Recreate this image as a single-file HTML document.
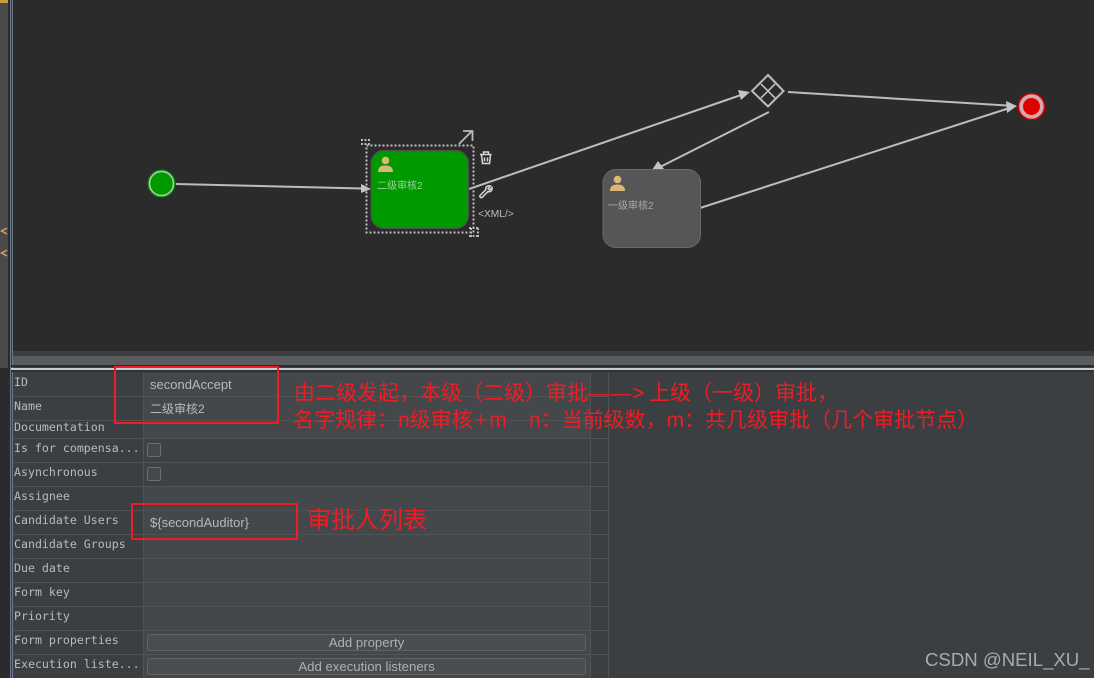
<!DOCTYPE html>
<html><head><meta charset="utf-8">
<style>
html,body{margin:0;padding:0;background:#3c3f41}
#p{position:relative;width:1094px;height:678px;overflow:hidden;background:#3c3f41;font-family:"Liberation Sans","Noto Sans CJK SC",sans-serif}
.a{position:absolute}
.l{position:absolute;left:14px;font:11.6px/14px "DejaVu Sans Mono","Liberation Mono",monospace;color:#b8bbbd;white-space:pre}
.h{position:absolute;left:13px;width:595px;height:1px;background:#505355}
.v{position:absolute;left:150px;font:13px/16px "Liberation Sans","Noto Sans CJK SC",sans-serif;color:#b8b8b8;white-space:pre}
.c{position:absolute;left:147px;width:12px;height:12px;border:1px solid #6b6e70;border-radius:2px;background:#45484a}
.b{position:absolute;left:147px;width:437px;height:15px;border:1px solid #606365;border-radius:3px;background:#4a4d4f;color:#aeb0b2;font-size:13.2px;line-height:16px;text-align:center}
.r{position:absolute;color:#ee1c25;font-size:21px;line-height:26px;white-space:pre}
.box{position:absolute;border:2px solid #ee1c25;box-sizing:border-box}
</style></head><body><div id="p">
<div class="a" style="left:0;top:0;width:8px;height:368px;background:#4a4a4a"></div>
<div class="a" style="left:0;top:0;width:9px;height:3px;background:#c8a040"></div>
<div class="a" style="left:8px;top:0;width:2px;height:368px;background:#2b2b2b"></div>
<div class="a" style="left:10px;top:0;width:1px;height:368px;background:#6a7a8c"></div>
<div class="a" style="left:11px;top:0;width:1px;height:368px;background:#3a3d40"></div>
<div class="a" style="left:12px;top:0;width:1px;height:368px;background:#6a7a8c"></div>
<div class="a" style="left:0;top:368px;width:10px;height:310px;background:#2b2b2b"></div>
<div class="a" style="left:10px;top:368px;width:1px;height:310px;background:#6a7a8c"></div>
<div class="a" style="left:11px;top:368px;width:1px;height:310px;background:#3c3f41"></div>
<div class="a" style="left:12px;top:368px;width:1px;height:310px;background:#6a7a8c"></div>
<div class="a" style="left:13px;top:0;width:1081px;height:351px;background:#2b2b2b"></div>
<div class="a" style="left:13px;top:351px;width:1081px;height:5px;background:#3c3f41"></div>
<div class="a" style="left:13px;top:356px;width:1081px;height:9px;background:#5a5b5d"></div>
<div class="a" style="left:11px;top:365px;width:1083px;height:2px;background:#2b2b2b"></div>
<div class="a" style="left:11px;top:368px;width:1083px;height:1.500px;background:#c8cbce"></div>
<div class="a" style="left:11px;top:370px;width:1083px;height:2px;background:#2f3234"></div>

<svg class="a" style="left:0;top:0" width="1094" height="360" viewBox="0 0 1094 360">
<g fill="none" stroke="#c8a868" stroke-width="1.500"><path d="M7 228l-5.500 3 5.500 3"/><path d="M7 250l-5.500 3 5.500 3"/></g>
<g fill="none" stroke="#bdbdbd" stroke-width="2">
<path d="M176 184L362 188.500"/><path d="M469 189L741 95"/><path d="M769 112L658 168"/><path d="M700 208L1008 108.500"/><path d="M788 92L1007 105.500"/>
</g>
<g fill="#c4c4c4">
<path d="M371 189L361 184V193Z"/><path d="M750 92L738 90L741 100Z"/><path d="M652 170L658 161L664 169Z"/><path d="M1017 106L1006 101L1007 113Z"/>
</g>
<circle cx="161.500" cy="183.500" r="13.500" fill="#009900" stroke="#0a8a0a" stroke-width="1"/>
<circle cx="161.500" cy="183.500" r="12" fill="#009900" stroke="#b5c9b5" stroke-width="1.500"/>
<circle cx="1031.500" cy="106.500" r="13" fill="#d7a8a8" stroke="#c80000" stroke-width="1.500"/>
<circle cx="1031.500" cy="106.500" r="8.500" fill="#dd0000"/>
<path d="M768 75L783.500 91L768 106.500L752 91Z" fill="#2b2b2b" stroke="#bdbdbd" stroke-width="2"/>
<path d="M761 84L775 98M775 84L761 98" stroke="#bdbdbd" stroke-width="1.600"/>
<rect x="371" y="150.500" width="97.500" height="78" rx="13" fill="#009900" stroke="#4f4f4f" stroke-width="1.200"/>
<rect x="603" y="169.500" width="97.500" height="78" rx="13" fill="#565656" stroke="#6a6a6a" stroke-width="1"/>
<rect x="366.500" y="145.500" width="107" height="87" fill="none" stroke="#bdbdbd" stroke-width="2" stroke-dasharray="2 2"/>
<g fill="none" stroke="#bdbdbd" stroke-width="2" stroke-dasharray="2 1.500"><path d="M361 140H371M361 144H371"/><path d="M469 228H479M469 236H479M471 228V237M478 228V237"/></g>
<g fill="#dcb878"><circle cx="385.500" cy="160.500" r="3.800"/><path d="M378 172c0-5 3-6.500 7.500-6.500s7.500 1.500 7.500 6.500z"/>
<circle cx="617.500" cy="179.500" r="3.800"/><path d="M610 191c0-5 3-6.500 7.500-6.500s7.500 1.500 7.500 6.500z"/></g>
<path d="M459 144L472 131M463 131H472.500V141" fill="none" stroke="#bdbdbd" stroke-width="1.800"/>
<g fill="none" stroke="#d8d8d8" stroke-width="1.500"><path d="M480 154.500H491.500M483.500 154.500V152H488.500V154.500M481.500 155L482.500 163.500H489.500L490.500 155"/><path d="M484.500 157.500V161.500M487.500 157.500V161.500"/>
<path d="M480 195.500L486 189.500C485 187 487.500 185 490.500 186L488 188.500L489.500 190L492 187.500C492.500 190.500 490.500 192.500 488 191.500L482 197.500C480.800 198.200 479.300 196.700 480 195.500Z"/></g>
<text x="478" y="217" font-family="Liberation Sans" font-size="10.200" fill="#bcbcbc">&lt;XML/&gt;</text>
<text x="377" y="189" font-family="Liberation Sans,Noto Sans CJK SC,sans-serif" font-size="10" fill="#9fd09f">二级审核2</text>
<text x="608" y="209" font-family="Liberation Sans,Noto Sans CJK SC,sans-serif" font-size="10" fill="#a8a8a8">一级审核2</text>
</svg>

<div class="a" style="left:13px;top:373px;width:595px;height:305px;background:#3c3f41"></div>
<div class="a" style="left:144px;top:373px;width:446px;height:65px;background:#45484a"></div>
<div class="a" style="left:144px;top:438px;width:446px;height:48px;background:#3e4143"></div>
<div class="a" style="left:144px;top:486px;width:446px;height:192px;background:#45484a"></div>
<div class="h" style="top:396px"></div><div class="h" style="top:420px"></div><div class="h" style="top:438px"></div>
<div class="h" style="top:462px"></div><div class="h" style="top:486px"></div><div class="h" style="top:510px"></div>
<div class="h" style="top:534px"></div><div class="h" style="top:558px"></div><div class="h" style="top:582px"></div>
<div class="h" style="top:606px"></div><div class="h" style="top:630px"></div><div class="h" style="top:654px"></div>
<div class="a" style="left:143px;top:373px;width:1px;height:305px;background:#505355"></div>
<div class="a" style="left:590px;top:373px;width:1px;height:305px;background:#505355"></div>
<div class="a" style="left:608px;top:373px;width:1px;height:305px;background:#505355"></div>

<div class="l" style="top:375px">ID</div>
<div class="l" style="top:399px">Name</div>
<div class="l" style="top:420px">Documentation</div>
<div class="l" style="top:441px">Is for compensa...</div>
<div class="l" style="top:465px">Asynchronous</div>
<div class="l" style="top:489px">Assignee</div>
<div class="l" style="top:513px">Candidate Users</div>
<div class="l" style="top:537px">Candidate Groups</div>
<div class="l" style="top:561px">Due date</div>
<div class="l" style="top:585px">Form key</div>
<div class="l" style="top:609px">Priority</div>
<div class="l" style="top:633px">Form properties</div>
<div class="l" style="top:657px">Execution liste...</div>

<div class="v" style="top:377px">secondAccept</div>
<div class="v" style="top:401px;font-size:12px">二级审核2</div>
<div class="v" style="top:515px">${secondAuditor}</div>
<div class="c" style="top:443px"></div>
<div class="c" style="top:467px"></div>
<div class="b" style="top:634px">Add property</div>
<div class="b" style="top:658px">Add execution listeners</div>

<div class="box" style="left:114px;top:366px;width:165px;height:58px"></div>
<div class="box" style="left:131px;top:503px;width:167px;height:37px"></div>
<div class="r" style="left:294px;top:381px">由二级发起，本级（二级）审批</div>
<div class="r" style="left:588px;top:381px;letter-spacing:1px">——&gt;</div>
<div class="r" style="left:649px;top:381px">上级（一级）审批，</div>
<div class="r" style="left:293px;top:408px">名字规律：n级审核</div>
<div class="r" style="left:475px;top:408px;letter-spacing:2px">+m</div>
<div class="r" style="left:529px;top:408px">n：当前级数，m：共几级审批（几个审批节点）</div>
<div class="r" style="left:307px;top:506px;font-size:24px;line-height:30px">审批人列表</div>
<div class="a" style="left:925px;top:649px;font-size:18.600px;line-height:22px;color:#a8aaab;white-space:pre">CSDN @NEIL_XU_</div>
</div></body></html>
